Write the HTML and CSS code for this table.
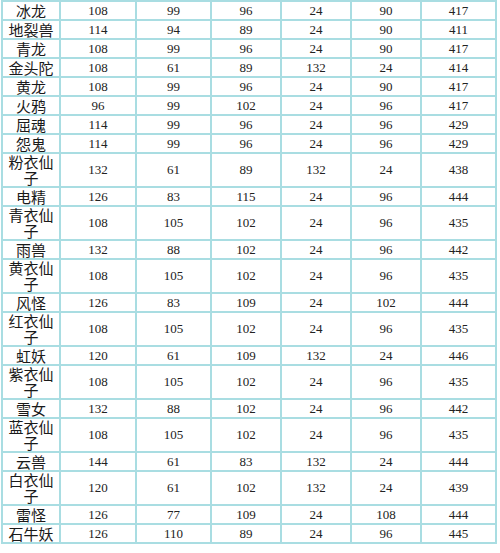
FILE: index.html
```html
<!DOCTYPE html>
<html>
<head>
<meta charset="utf-8">
<link rel="stylesheet" href="styles.css">
</head>
<body>
<table class="stats">
<colgroup>
<col class="c1"><col class="c2"><col class="c3"><col class="c4"><col class="c5"><col class="c6"><col class="c7">
</colgroup>
<tbody>
<tr><td class="name">冰龙</td><td>108</td><td>99</td><td>96</td><td>24</td><td>90</td><td>417</td></tr>
<tr><td class="name">地裂兽</td><td>114</td><td>94</td><td>89</td><td>24</td><td>90</td><td>411</td></tr>
<tr><td class="name">青龙</td><td>108</td><td>99</td><td>96</td><td>24</td><td>90</td><td>417</td></tr>
<tr><td class="name">金头陀</td><td>108</td><td>61</td><td>89</td><td>132</td><td>24</td><td>414</td></tr>
<tr><td class="name">黄龙</td><td>108</td><td>99</td><td>96</td><td>24</td><td>90</td><td>417</td></tr>
<tr><td class="name">火鸦</td><td>96</td><td>99</td><td>102</td><td>24</td><td>96</td><td>417</td></tr>
<tr><td class="name">屈魂</td><td>114</td><td>99</td><td>96</td><td>24</td><td>96</td><td>429</td></tr>
<tr><td class="name">怨鬼</td><td>114</td><td>99</td><td>96</td><td>24</td><td>96</td><td>429</td></tr>
<tr><td class="name">粉衣仙子</td><td>132</td><td>61</td><td>89</td><td>132</td><td>24</td><td>438</td></tr>
<tr><td class="name">电精</td><td>126</td><td>83</td><td>115</td><td>24</td><td>96</td><td>444</td></tr>
<tr><td class="name">青衣仙子</td><td>108</td><td>105</td><td>102</td><td>24</td><td>96</td><td>435</td></tr>
<tr><td class="name">雨兽</td><td>132</td><td>88</td><td>102</td><td>24</td><td>96</td><td>442</td></tr>
<tr><td class="name">黄衣仙子</td><td>108</td><td>105</td><td>102</td><td>24</td><td>96</td><td>435</td></tr>
<tr><td class="name">风怪</td><td>126</td><td>83</td><td>109</td><td>24</td><td>102</td><td>444</td></tr>
<tr><td class="name">红衣仙子</td><td>108</td><td>105</td><td>102</td><td>24</td><td>96</td><td>435</td></tr>
<tr><td class="name">虹妖</td><td>120</td><td>61</td><td>109</td><td>132</td><td>24</td><td>446</td></tr>
<tr><td class="name">紫衣仙子</td><td>108</td><td>105</td><td>102</td><td>24</td><td>96</td><td>435</td></tr>
<tr><td class="name">雪女</td><td>132</td><td>88</td><td>102</td><td>24</td><td>96</td><td>442</td></tr>
<tr><td class="name">蓝衣仙子</td><td>108</td><td>105</td><td>102</td><td>24</td><td>96</td><td>435</td></tr>
<tr><td class="name">云兽</td><td>144</td><td>61</td><td>83</td><td>132</td><td>24</td><td>444</td></tr>
<tr><td class="name">白衣仙子</td><td>120</td><td>61</td><td>102</td><td>132</td><td>24</td><td>439</td></tr>
<tr><td class="name">雷怪</td><td>126</td><td>77</td><td>109</td><td>24</td><td>108</td><td>444</td></tr>
<tr><td class="name">石牛妖</td><td>126</td><td>110</td><td>89</td><td>24</td><td>96</td><td>445</td></tr>
</tbody>
</table>
</body>
</html>
```
FILE: styles.css
```css
html, body {
  margin: 0;
  padding: 0;
  background: #ffffff;
}

body {
  padding: 0 0 0 1px;
}

.stats {
  table-layout: fixed;
  border-collapse: separate;
  border-spacing: 0;
  border: 1px solid #a9dde2;
  width: 496px;
  font-family: "Liberation Serif", "Times New Roman", serif;
  font-size: 13px;
  color: #222222;
}

.c1 { width: 58px; }
.c2 { width: 76px; }
.c3 { width: 75px; }
.c4 { width: 70px; }
.c5 { width: 70px; }
.c6 { width: 70px; }
.c7 { width: 75px; }

.stats td {
  border: 1px solid #a9dde2;
  padding: 0;
  height: 17px;
  line-height: 16px;
  text-align: center;
  vertical-align: middle;
}

.stats td.name {
  font-family: "Noto Sans CJK SC", "Noto Sans CJK JP", sans-serif;
  font-size: 15px;
  color: #1a1a1a;
  padding: 0 4px;
}
```
